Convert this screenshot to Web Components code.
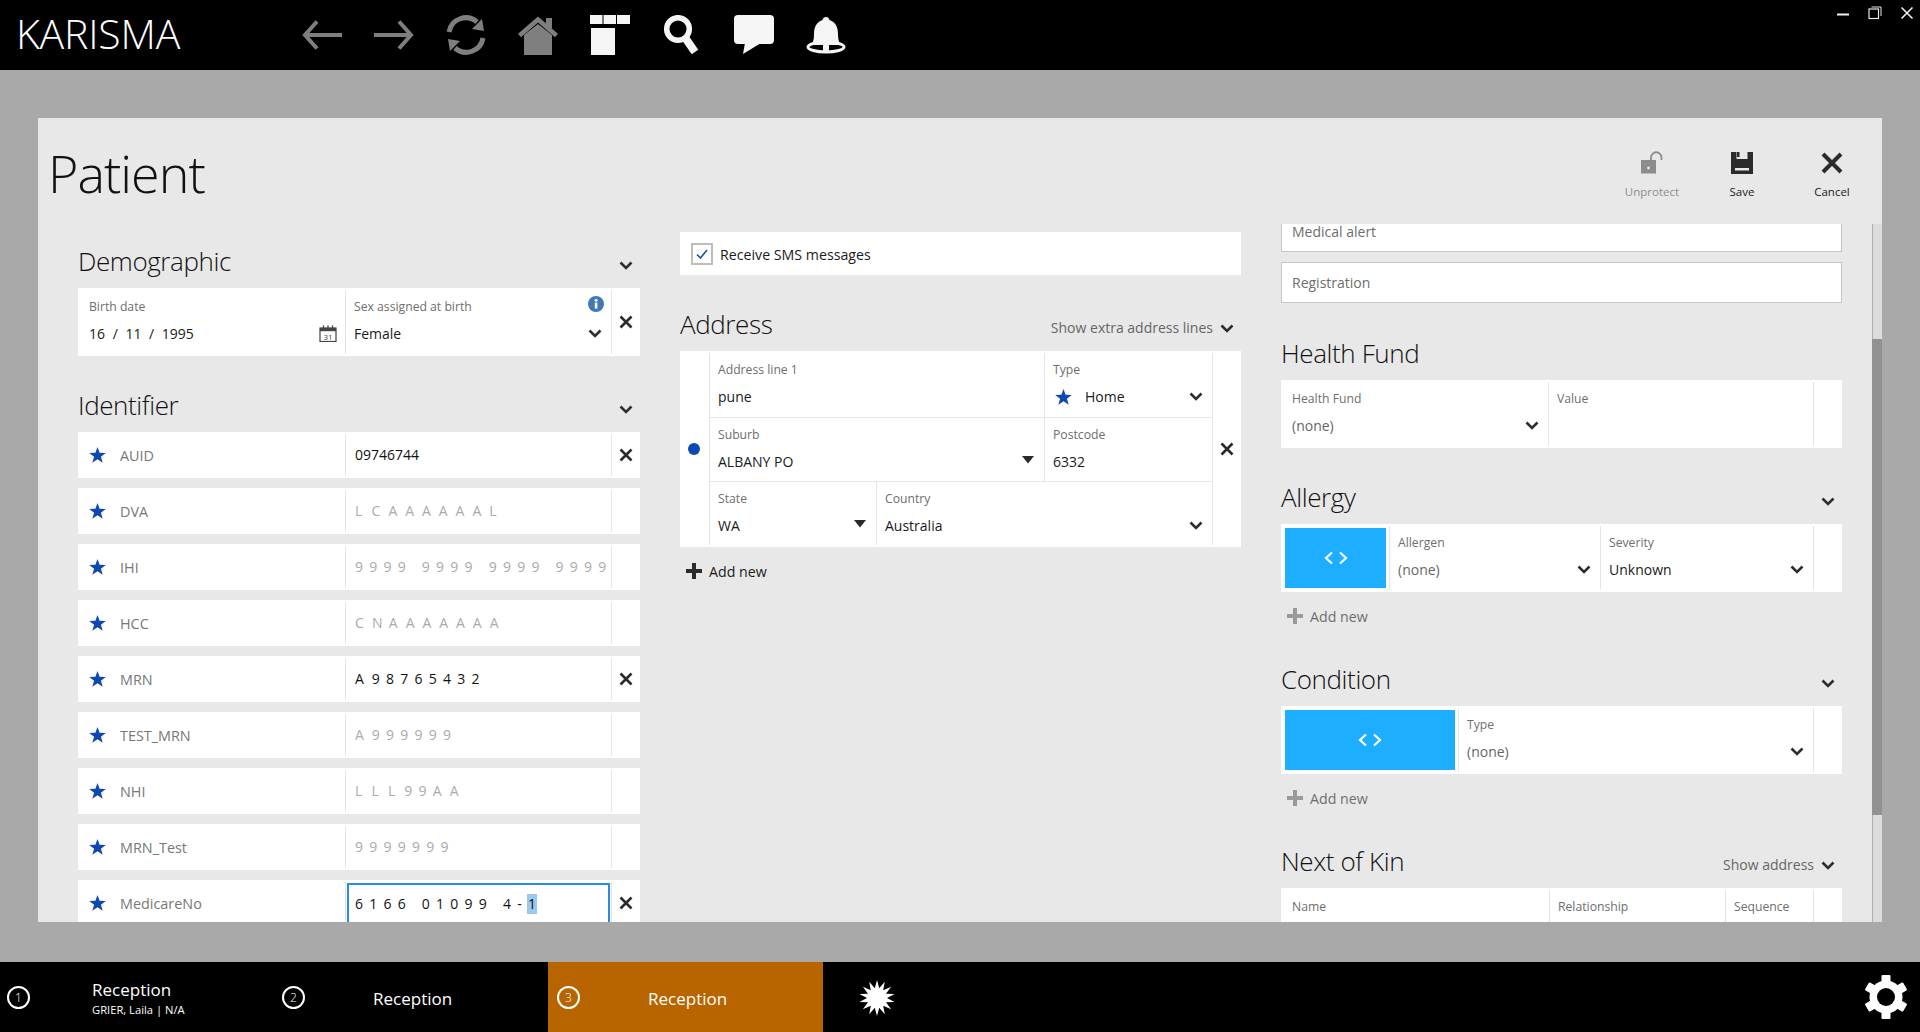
<!DOCTYPE html>
<html>
<head>
<meta charset="utf-8">
<title>Karisma</title>
<style>
  html, body { margin: 0; height: 100%; overflow: hidden; }
  body { display: flex; flex-direction: column; background: #a9a9a9; font-family: "Open Sans", "Liberation Sans", sans-serif; color: #1a1a1a; }
</style>
</head>
<body>
<k-topbar></k-topbar>
<k-stage>
  <k-panel heading="Patient">
    <k-col style="padding-top:20px">
      <k-section heading="Demographic" style="margin:0">
        <k-card>
          <k-field label="Birth date" icon="cal" first style="flex:0 0 268px"><k-date></k-date></k-field>
          <k-field label="Sex assigned at birth" icon="chev" info style="flex:0 0 266px">Female</k-field>
          <k-del></k-del>
        </k-card>
      </k-section>
      <k-section heading="Identifier">
        <k-list>
          <k-id label="AUID" filled clear>09746744</k-id>
          <k-id label="DVA" mask="L C A A A A A A L"></k-id>
          <k-id label="IHI" mask="9 9 9 9   9 9 9 9   9 9 9 9   9 9 9 9"></k-id>
          <k-id label="HCC" mask="C N A A A A A A A"></k-id>
          <k-id label="MRN" filled clear mask="A 9 8 7 6 5 4 3 2"></k-id>
          <k-id label="TEST_MRN" mask="A 9 9 9 9 9 9"></k-id>
          <k-id label="NHI" mask="L L L 9 9 A A"></k-id>
          <k-id label="MRN_Test" mask="9 9 9 9 9 9 9"></k-id>
          <k-id label="MedicareNo" filled clear focused mask="6 1 6 6   0 1 0 9 9   4 - "><k-sel>1</k-sel></k-id>
        </k-list>
      </k-section>
    </k-col>
    <k-col style="padding-top:8px">
      <k-check>Receive SMS messages</k-check>
      <k-section heading="Address" action="Show extra address lines">
        <k-address></k-address>
        <k-add dark>Add new</k-add>
      </k-section>
    </k-col>
    <k-col style="margin-top:-13px">
      <k-input>Medical alert</k-input>
      <k-input style="margin-top:10px">Registration</k-input>
      <k-section heading="Health Fund" noarrow style="margin-top:33px">
        <k-card>
          <k-field label="Health Fund" icon="chev" first muted style="flex:0 0 268px">(none)</k-field>
          <k-field label="Value" style="flex:0 0 265px"></k-field>
        </k-card>
      </k-section>
      <k-section heading="Allergy">
        <k-card>
          <k-code style="flex:0 0 109px"></k-code>
          <k-field label="Allergen" icon="chev" muted style="flex:0 0 211px">(none)</k-field>
          <k-field label="Severity" icon="chev" style="flex:0 0 213px">Unknown</k-field>
        </k-card>
        <k-add>Add new</k-add>
      </k-section>
      <k-section heading="Condition" style="margin-top:34px">
        <k-card>
          <k-code style="flex:0 0 178px"></k-code>
          <k-field label="Type" icon="chev" muted style="flex:0 0 355px">(none)</k-field>
        </k-card>
        <k-add>Add new</k-add>
      </k-section>
      <k-section heading="Next of Kin" action="Show address" style="margin-top:34px">
        <k-card>
          <k-field label="Name" first style="flex:0 0 269px"></k-field>
          <k-field label="Relationship" style="flex:0 0 176px"></k-field>
          <k-field label="Sequence" style="flex:0 0 88px"></k-field>
        </k-card>
      </k-section>
    </k-col>
  </k-panel>
</k-stage>
<k-tabbar></k-tabbar>

<script>
const ICON = {
  chev: `<svg width="14" height="9" viewBox="0 0 14 9"><polyline points="1.5,1.5 7,7 12.5,1.5" fill="none" stroke="#2e2e2e" stroke-width="2.6"/></svg>`,
  tri: `<svg width="14" height="9" viewBox="0 0 14 9"><polygon points="1,1 13,1 7,8.5" fill="#2b2b2b"/></svg>`,
  x: `<svg width="14" height="14" viewBox="0 0 14 14"><path d="M1.5 1.5L12.5 12.5M12.5 1.5L1.5 12.5" fill="none" stroke="#2b2b2b" stroke-width="2.6"/></svg>`,
  star: `<svg width="17" height="16" viewBox="0 0 17 16"><polygon points="8.5,0 10.6,5.8 16.8,6 11.9,9.8 13.7,15.8 8.5,12.3 3.3,15.8 5.1,9.8 0.2,6 6.4,5.8" fill="#0f47b5"/></svg>`,
  cal: `<svg width="18" height="17" viewBox="0 0 18 17"><rect x="1" y="3" width="16" height="13.5" fill="none" stroke="#444" stroke-width="1.2"/><rect x="1" y="3" width="16" height="3.2" fill="#444"/><path d="M4.5 0.5V4M9 0.5V4M13.5 0.5V4" stroke="#444" stroke-width="1.4"/><text x="9" y="14.6" font-size="8" text-anchor="middle" fill="#444" font-family="Open Sans">31</text></svg>`,
  info: `<svg width="16" height="16" viewBox="0 0 16 16"><circle cx="8" cy="8" r="8" fill="#3f7ab5"/><rect x="6.8" y="6.6" width="2.6" height="6" fill="#fff"/><circle cx="8.1" cy="4.2" r="1.5" fill="#fff"/></svg>`
};

// extra gap after a mask letter, the digits keep the plain pitch
const MASK_GAP = { A: 1.7, L: 2.9, C: 1.9, N: 0.1 };

class Topbar extends HTMLElement {
  connectedCallback() {
    const g = '#7f7f7f', w = '#f5f5f5';
    this.attachShadow({ mode: 'open' }).innerHTML = `
      <style>
        :host { display: flex; align-items: center; flex: 0 0 70px; background: #000; position: relative; }
        .brand { flex: 0 0 302px; padding-left: 16px; box-sizing: border-box; color: #fff; font-weight: 300; font-size: 41px; margin-top: -4px; letter-spacing: -0.2px; }
        .icons { display: flex; gap: 32px; }
        svg { display: block; }
        .win { position: absolute; top: 6px; right: 6px; display: flex; gap: 18px; }
      </style>
      <div class="brand">KARISMA</div>
      <div class="icons">
        <svg width="40" height="40" viewBox="0 0 40 40"><path d="M40 20H4M15 6.5L3 20L15 33.5" fill="none" stroke="${g}" stroke-width="4"/></svg>
        <svg width="40" height="40" viewBox="0 0 40 40"><path d="M0 20H36M25 6.5L37 20L25 33.5" fill="none" stroke="${g}" stroke-width="4"/></svg>
        <svg width="40" height="40" viewBox="0 0 40 40"><path d="M3 17A17 17 0 0 1 31 7M37 23A17 17 0 0 1 9 33" fill="none" stroke="${g}" stroke-width="5"/><polygon points="36,4 38,16 26,14" fill="${g}"/><polygon points="2,24 4,36 14,26" fill="${g}"/></svg>
        <svg width="40" height="40" viewBox="0 0 40 40"><path d="M1.5 20.5L20 4.5L38.5 20.5" fill="none" stroke="${g}" stroke-width="4.5"/><polygon points="6,40 34,40 34,20 20,9 6,20" fill="${g}"/><rect x="28" y="3" width="6" height="10" fill="${g}"/></svg>
        <svg width="40" height="40" viewBox="0 0 40 40"><rect x="0" y="0" width="12.5" height="9" fill="${w}"/><rect x="13.5" y="0" width="12.5" height="9" fill="${w}"/><rect x="27" y="0" width="13" height="9" fill="${w}"/><rect x="1" y="13" width="24" height="27" fill="${w}"/></svg>
        <svg width="40" height="40" viewBox="0 0 40 40" style="margin-left:2px;margin-right:-2px"><circle cx="14" cy="14" r="11.3" fill="none" stroke="${w}" stroke-width="5.5"/><path d="M22 24L31 37" stroke="${w}" stroke-width="8"/></svg>
        <svg width="40" height="40" viewBox="0 0 40 40"><rect x="0" y="0" width="40" height="29" rx="4" fill="${w}"/><polygon points="11,28 9,39 27,28" fill="${w}"/></svg>
        <svg width="40" height="40" viewBox="0 0 40 40"><ellipse cx="20" cy="32" rx="18" ry="5" fill="none" stroke="${w}" stroke-width="3"/><path d="M20 2C22 2 23 3 23.5 5C30 7 32 13 32 19C32 24 33 27 34 30H23V37H17V30H6C7 27 8 24 8 19C8 13 10 7 16.5 5C17 3 18 2 20 2Z" fill="${w}"/></svg>
      </div>
      <div class="win">
        <svg width="14" height="14" viewBox="0 0 14 14"><path d="M1 8.5H13" stroke="#f0f0f0" stroke-width="2"/></svg>
        <svg width="14" height="14" viewBox="0 0 14 14"><rect x="1" y="3" width="9.5" height="9.5" fill="none" stroke="#e8e8e8" stroke-width="1.2"/><path d="M3.5 1H13V10" fill="none" stroke="#e8e8e8" stroke-width="1"/></svg>
        <svg width="14" height="14" viewBox="0 0 14 14"><path d="M1.5 1.5L12.5 12.5M12.5 1.5L1.5 12.5" stroke="#f0f0f0" stroke-width="1.6"/></svg>
      </div>`;
  }
}

class Stage extends HTMLElement {
  connectedCallback() {
    this.attachShadow({ mode: 'open' }).innerHTML = `
      <style>:host { display: flex; flex: 0 0 892px; min-height: 0; box-sizing: border-box; padding: 48px 38px 40px; background: #a9a9a9; overflow: hidden; }</style>
      <slot></slot>`;
  }
}

class Panel extends HTMLElement {
  connectedCallback() {
    this.attachShadow({ mode: 'open' }).innerHTML = `
      <style>
        :host { display: flex; flex-direction: column; flex: 1; min-height: 0; background: #e8e8e8; overflow: hidden; }
        header { display: flex; flex: 0 0 106px; justify-content: space-between; padding: 0 5px 0 10px; }
        h1 { margin: 22px 0 0; font-weight: 300; font-size: 52px; line-height: 66px; letter-spacing: -1px; color: #111; }
        .actions { display: flex; }
        .act { width: 90px; padding-top: 33px; display: flex; flex-direction: column; align-items: center; font-size: 11.5px; color: #1a1a1a; }
        .act svg { display: block; height: 26px; margin-bottom: 7px; }
        .off { color: #8e8e8e; }
        .body { flex: 1; display: flex; min-height: 0; padding-left: 40px; overflow: hidden; }
        ::slotted(k-col:nth-child(1)) { flex: 0 0 562px; }
        ::slotted(k-col:nth-child(2)) { flex: 0 0 561px; margin-left: 40px; }
        ::slotted(k-col:nth-child(3)) { flex: 0 0 561px; margin-left: 40px; }
        .bar { flex: 0 0 9px; margin-left: 30px; display: flex; flex-direction: column; background: #dcdcdc; border-left: 1px solid #aeaeae; }
        .thumb { margin: 115px 0 0 -1px; height: 476px; background: #919191; }
      </style>
      <header>
        <h1>${this.getAttribute('heading')}</h1>
        <div class="actions">
          <div class="act off"><svg width="24" height="26" viewBox="0 0 24 26"><rect x="1" y="9" width="15" height="13.5" fill="#8c8c8c"/><circle cx="8.5" cy="17" r="1.4" fill="#e8e8e8"/><path d="M11 9V6.5A5 5 0 0 1 21.5 6.5V9" fill="none" stroke="#8c8c8c" stroke-width="1.8"/></svg>Unprotect</div>
          <div class="act"><svg width="24" height="26" viewBox="0 0 24 26"><path d="M1 1H23V23H1Z" fill="#2b2b2b"/><rect x="6.5" y="1" width="11" height="7" fill="#e8e8e8"/><rect x="7" y="1" width="2.5" height="5" fill="#2b2b2b"/><rect x="5" y="17" width="14" height="2.5" fill="#e8e8e8"/></svg>Save</div>
          <div class="act"><svg width="24" height="26" viewBox="0 0 24 26"><path d="M3 3L21 21M21 3L3 21" fill="none" stroke="#2b2b2b" stroke-width="4"/></svg>Cancel</div>
        </div>
      </header>
      <div class="body">
        <slot></slot>
        <div class="bar"><div class="thumb"></div></div>
      </div>`;
  }
}

class Col extends HTMLElement {
  connectedCallback() {
    this.attachShadow({ mode: 'open' }).innerHTML = `
      <style>:host { display: block; box-sizing: border-box; min-width: 0; }</style><slot></slot>`;
  }
}

class Section extends HTMLElement {
  connectedCallback() {
    const action = this.getAttribute('action');
    const arrow = this.hasAttribute('noarrow') ? '' : ICON.chev;
    this.attachShadow({ mode: 'open' }).innerHTML = `
      <style>
        :host { display: block; margin-top: 32px; }
        .head { display: flex; align-items: center; height: 36px; margin-bottom: 8px; padding-right: 7px; }
        h2 { flex: 1; margin: -3px 0 0; font-weight: 300; font-size: 26px; letter-spacing: -0.4px; color: #111; }
        .more { font-size: 14px; color: #666; margin: 4px 7px 0 0; }
        .arrow { display: flex; margin-top: 7px; }
      </style>
      <div class="head"><h2>${this.getAttribute('heading')}</h2>
        ${action ? `<span class="more">${action}</span>` : ''}
        <span class="arrow">${arrow}</span></div>
      <slot></slot>`;
  }
}

class Card extends HTMLElement {
  connectedCallback() {
    this.attachShadow({ mode: 'open' }).innerHTML = `
      <style>:host { display: flex; height: 68px; box-sizing: border-box; padding: 2px 0; background: #fff; }</style>
      <slot></slot>`;
  }
}

class Field extends HTMLElement {
  connectedCallback() {
    const icon = this.getAttribute('icon');
    const pad = this.hasAttribute('first') ? 11 : 8;
    const right = icon === 'cal' ? 8 : 9;
    const noBorder = this.hasAttribute('noborder');
    const lift = icon === 'tri' ? -5 : -1;
    this.attachShadow({ mode: 'open' }).innerHTML = `
      <style>
        :host { display: flex; flex-direction: column; flex: 1; box-sizing: border-box; min-width: 0; position: relative; padding-left: ${pad}px; border-right: ${noBorder ? 0 : 1}px solid #e4e4e4; }
        .l { margin-top: 8px; height: 17px; line-height: 17px; font-size: 12.2px; color: #6e6e6e; }
        .v { display: flex; align-items: center; height: 20px; line-height: 20px; margin-top: 9px; padding-right: ${right}px; font-size: 14px; color: ${this.hasAttribute('muted') ? '#666' : '#1a1a1a'}; }
        .t { flex: 1; display: flex; align-items: center; }
        .i { display: flex; margin-top: ${lift}px; }
        .info { position: absolute; top: 6px; right: 7px; display: flex; }
      </style>
      <div class="l">${this.getAttribute('label')}</div>
      <div class="v"><span class="t"><slot name="lead"></slot><slot></slot></span>${icon ? `<span class="i">${ICON[icon]}</span>` : ''}</div>
      ${this.hasAttribute('info') ? `<span class="info">${ICON.info}</span>` : ''}`;
  }
}

class DateValue extends HTMLElement {
  connectedCallback() {
    this.attachShadow({ mode: 'open' }).innerHTML = `
      <style>:host { display: inline; word-spacing: 4px; font-size: 14px; }</style>16 / 11 / 1995`;
  }
}

class Del extends HTMLElement {
  connectedCallback() {
    this.attachShadow({ mode: 'open' }).innerHTML = `
      <style>:host { display: flex; flex: 1; align-items: center; justify-content: center; } svg { display: block; }</style>${ICON.x}`;
  }
}

class Star extends HTMLElement {
  connectedCallback() {
    this.attachShadow({ mode: 'open' }).innerHTML = `
      <style>:host { display: inline-flex; } svg { display: block; }</style>${ICON.star}`;
  }
}

class Sel extends HTMLElement {
  connectedCallback() {
    this.attachShadow({ mode: 'open' }).innerHTML = `
      <style>:host { display: inline-block; white-space: normal; letter-spacing: 0; background: #99c9ef; line-height: 20px; padding: 0 1px; margin-left: -1px; }</style><slot></slot>`;
  }
}

class List extends HTMLElement {
  connectedCallback() {
    this.attachShadow({ mode: 'open' }).innerHTML = `
      <style>:host { display: flex; flex-direction: column; gap: 10px; }</style><slot></slot>`;
  }
}

class IdRow extends HTMLElement {
  connectedCallback() {
    const filled = this.hasAttribute('filled');
    const focused = this.hasAttribute('focused');
    const mask = this.getAttribute('mask');
    const text = mask === null ? '' : mask.replace(/([ALCN]) /g, (m, c) => `<span style="word-spacing:${MASK_GAP[c]}px">${c} </span>`);
    this.attachShadow({ mode: 'open' }).innerHTML = `
      <style>
        :host { display: grid; grid-template-columns: 268px 266px 28px; grid-template-rows: 42px; height: 46px; box-sizing: border-box; padding: 2px 0; background: #fff; }
        .name { display: flex; align-items: center; gap: 14px; padding-left: 11px; font-size: 14.4px; color: #777; border-right: 1px solid #e4e4e4; }
        .name svg { display: block; }
        .val { display: block; line-height: 42px; padding-left: 9px; white-space: pre; overflow: hidden; font-size: 14px; border-right: 1px solid #e4e4e4;
          color: ${filled ? '#111' : '#aaa'}; letter-spacing: ${mask === null ? '0' : '1.3px'}; }
        .focus { border: 2px solid #2a8be0; margin: 1px 1px 0 1px; padding-left: 6px; box-sizing: border-box; height: 44px; line-height: 37px; }
        .wrap { border-right: 1px solid #e4e4e4; }
      </style>
      <div class="name">${ICON.star}<span>${this.getAttribute('label')}</span></div>
      ${focused ? `<div class="wrap"><div class="val focus">${text}<slot></slot></div></div>` : `<div class="val">${text}<slot></slot></div>`}
      ${this.hasAttribute('clear') ? '<k-del></k-del>' : '<span></span>'}`;
  }
}

class Check extends HTMLElement {
  connectedCallback() {
    this.attachShadow({ mode: 'open' }).innerHTML = `
      <style>
        :host { display: flex; align-items: center; gap: 7px; height: 43px; box-sizing: border-box; padding-left: 11px; background: #fff; font-size: 14.2px; color: #1a1a1a; }
        svg { display: block; }
        span { margin-top: 1px; }
      </style>
      <svg width="22" height="22" viewBox="0 0 22 22"><rect x="1" y="1" width="20" height="20" fill="#fff" stroke="#bdbdbd" stroke-width="2"/><polyline points="6,11.5 9.5,15 16,7" fill="none" stroke="#1a4fb0" stroke-width="1.6"/></svg>
      <span><slot></slot></span>`;
  }
}

class Input extends HTMLElement {
  connectedCallback() {
    this.attachShadow({ mode: 'open' }).innerHTML = `
      <style>
        :host { display: flex; align-items: center; height: 41px; box-sizing: border-box; padding-left: 10px; background: #fff; border: 1px solid #c6c6c6; font-size: 14px; color: #6e6e6e; }
      </style><slot></slot>`;
  }
}

class Address extends HTMLElement {
  connectedCallback() {
    this.attachShadow({ mode: 'open' }).innerHTML = `
      <style>
        :host { display: flex; height: 196px; box-sizing: border-box; padding: 2px 0; background: #fff; }
        .dot { flex: 0 0 29px; display: flex; align-items: center; justify-content: center; border-right: 1px solid #e4e4e4; }
        .dot i { width: 12px; height: 12px; border-radius: 50%; background: #0f47b5; margin-left: -1px; }
        .rows { flex: 0 0 503px; display: flex; flex-direction: column; border-right: 1px solid #e4e4e4; box-sizing: border-box; }
        .r { display: flex; height: 64px; border-bottom: 1px solid #e4e4e4; box-sizing: border-box; }
        .r:first-child { height: 65px; }
        .r:last-child { border-bottom: 0; flex: 1; }
        k-field:last-child { border-right: 0; }
      </style>
      <div class="dot"><i></i></div>
      <div class="rows">
        <div class="r">
          <k-field label="Address line 1" style="flex:0 0 335px"><span>pune</span></k-field>
          <k-field label="Type" icon="chev" noborder><k-star slot="lead" style="margin:0 13px 0 2px"></k-star>Home</k-field>
        </div>
        <div class="r">
          <k-field label="Suburb" icon="tri" style="flex:0 0 335px">ALBANY PO</k-field>
          <k-field label="Postcode" noborder>6332</k-field>
        </div>
        <div class="r">
          <k-field label="State" icon="tri" style="flex:0 0 167px">WA</k-field>
          <k-field label="Country" icon="chev" noborder>Australia</k-field>
        </div>
      </div>
      <k-del></k-del>`;
  }
}

class Add extends HTMLElement {
  connectedCallback() {
    const dark = this.hasAttribute('dark');
    const c = dark ? '#2b2b2b' : '#9a9a9a';
    this.attachShadow({ mode: 'open' }).innerHTML = `
      <style>
        :host { display: flex; align-items: center; gap: 7px; height: 24px; margin-top: 12px; padding-left: 6px; font-size: 14.2px; color: ${dark ? '#1a1a1a' : '#6e6e6e'}; }
        svg { display: block; }
      </style>
      <svg width="16" height="16" viewBox="0 0 16 16"><path d="M8 0V16M0 8H16" stroke="${c}" stroke-width="4"/></svg><span><slot></slot></span>`;
  }
}

class Code extends HTMLElement {
  connectedCallback() {
    this.attachShadow({ mode: 'open' }).innerHTML = `
      <style>
        :host { display: flex; box-sizing: border-box; padding: 2px 3px 2px 4px; border-right: 1px solid #e4e4e4; }
        div { flex: 1; display: flex; align-items: center; justify-content: center; background: #1eaeff; }
        svg { display: block; }
      </style>
      <div><svg width="24" height="14" viewBox="0 0 24 14"><path d="M8 1.5L2 7L8 12.5M16 1.5L22 7L16 12.5" fill="none" stroke="#fff" stroke-width="2.2"/></svg></div>`;
  }
}

class Tabbar extends HTMLElement {
  connectedCallback() {
    let pts = [];
    for (let i = 0; i < 28; i++) {
      const r = i % 2 ? 10 : 18, a = Math.PI * i / 14;
      pts.push((18 + r * Math.sin(a)).toFixed(1) + ',' + (18 - r * Math.cos(a)).toFixed(1));
    }
    let gear = '';
    for (let i = 0; i < 6; i++) gear += `<rect x="17.5" y="0" width="9" height="9" rx="1" fill="#fff" transform="rotate(${i * 60} 22 22)"/>`;
    this.attachShadow({ mode: 'open' }).innerHTML = `
      <style>
        :host { display: flex; flex: 0 0 70px; align-items: center; background: #000; }
        .burst { margin-left: 36px; margin-top: 1px; display: block; }
        .gear { margin-left: auto; margin-right: 12px; display: block; }
      </style>
      <k-tab n="1" sub="GRIER, Laila | N/A" style="--p:7px;--g:62px">Reception</k-tab>
      <k-tab n="2" style="--p:8px;--g:68px">Reception</k-tab>
      <k-tab n="3" active style="--p:9px;--g:68px;flex-basis:275px">Reception</k-tab>
      <svg class="burst" width="36" height="36" viewBox="0 0 36 36"><polygon points="${pts.join(' ')}" fill="#fff"/></svg>
      <svg class="gear" width="44" height="44" viewBox="0 0 44 44"><circle cx="22" cy="22" r="16.5" fill="#fff"/>${gear}<circle cx="22" cy="22" r="9" fill="#000"/></svg>`;
  }
}

class Tab extends HTMLElement {
  connectedCallback() {
    const sub = this.getAttribute('sub');
    this.attachShadow({ mode: 'open' }).innerHTML = `
      <style>
        :host { display: flex; flex: 0 0 274px; align-items: center; height: 70px; box-sizing: border-box; padding-left: var(--p); gap: var(--g); color: #fff; background: ${this.hasAttribute('active') ? '#b86500' : '#000'}; }
        .n { flex: 0 0 23px; height: 23px; box-sizing: border-box; border: 2px solid #fff; border-radius: 50%; display: flex; align-items: center; justify-content: center; font-size: 12px; font-weight: 300; }
        .box { margin-top: 3px; }
        .t { font-size: 17px; line-height: 20px; font-weight: 400; }
        .s { font-size: 11.2px; line-height: 16px; margin-top: 2px; }
      </style>
      <div class="n">${this.getAttribute('n')}</div>
      <div class="box"><div class="t"><slot></slot></div>${sub ? `<div class="s">${sub}</div>` : ''}</div>`;
  }
}

customElements.define('k-topbar', Topbar);
customElements.define('k-stage', Stage);
customElements.define('k-panel', Panel);
customElements.define('k-col', Col);
customElements.define('k-section', Section);
customElements.define('k-card', Card);
customElements.define('k-field', Field);
customElements.define('k-date', DateValue);
customElements.define('k-del', Del);
customElements.define('k-star', Star);
customElements.define('k-sel', Sel);
customElements.define('k-list', List);
customElements.define('k-id', IdRow);
customElements.define('k-check', Check);
customElements.define('k-input', Input);
customElements.define('k-address', Address);
customElements.define('k-add', Add);
customElements.define('k-code', Code);
customElements.define('k-tabbar', Tabbar);
customElements.define('k-tab', Tab);
</script>
</body>
</html>
